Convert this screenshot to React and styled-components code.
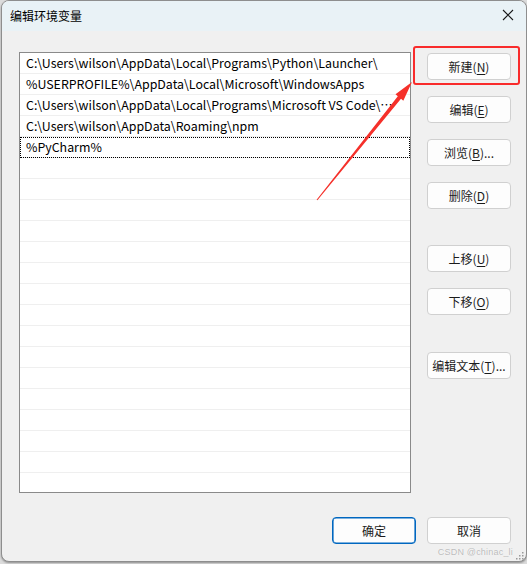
import React from "react";
import styled, { createGlobalStyle } from "styled-components";

const GlobalStyle = createGlobalStyle`
  html, body {
    margin: 0;
    padding: 0;
    background: #dcdcdc;
  }
  body {
    font-family: "Noto Sans CJK SC", "Noto Sans", sans-serif;
  }
`;

const Page = styled.div`
  position: relative;
  width: 527px;
  height: 564px;
  overflow: hidden;
`;

const Window = styled.div`
  box-sizing: border-box;
  margin-left: 1px;
  width: 526px;
  height: 562px;
  display: flex;
  flex-direction: column;
  background: #f0f0f0;
  border: 1px solid #8e8e8e;
  border-radius: 8px;
  overflow: hidden;
  box-shadow: 0 1px 2px rgba(0, 0, 0, 0.35);
`;

const TitleBar = styled.div`
  height: 30px;
  flex: none;
  display: flex;
  align-items: center;
  justify-content: space-between;
  padding: 0 12px 2px 8px;
  box-sizing: border-box;
  background: #e9f2f6;
  font-size: 12px;
  color: #000;
`;

const CloseIcon = () => (
  <svg width="12" height="12" viewBox="0 0 12 12">
    <path d="M1 1 L11 11 M11 1 L1 11" stroke="#1a1a1a" strokeWidth="1.1" />
  </svg>
);

const Body = styled.div`
  flex: 1;
  display: flex;
  flex-direction: column;
  padding: 21px 15px 0 17px;
`;

const Main = styled.div`
  display: flex;
  gap: 16px;
`;

const List = styled.div`
  box-sizing: border-box;
  width: 392px;
  height: 441px;
  background: #fff;
  border: 1px solid #8a8a8a;
  overflow: hidden;
`;

const Row = styled.div`
  box-sizing: border-box;
  height: 21px;
  padding: 1px 12px 0 6px;
  border-bottom: 1px solid #efefef;
  font-size: 12.4px;
  line-height: 19px;
  color: #000;
  white-space: nowrap;
  overflow: hidden;
  text-overflow: ellipsis;
  outline: ${(p) => (p.$focused ? "1px dotted #000" : "none")};
  outline-offset: -1px;
`;

const Side = styled.div`
  display: flex;
  flex-direction: column;
  gap: 16px;
  padding-top: 1px;
`;

const Button = styled.button`
  box-sizing: border-box;
  width: 84px;
  height: 27px;
  margin-top: ${(p) => p.$push || 0}px;
  padding: 0;
  background: #fdfdfd;
  border: 1px solid ${(p) => (p.$primary ? "#0067c0" : "#d0d0d0")};
  box-shadow: ${(p) => (p.$primary ? "inset 0 0 0 0.6px #0067c0" : "none")};
  border-radius: 4px;
  font-family: "Noto Sans CJK SC", "Noto Sans", sans-serif;
  font-size: 12px;
  color: #1b1b1b;
  u {
    text-underline-offset: 2px;
  }
`;

const Footer = styled.div`
  display: flex;
  justify-content: flex-end;
  gap: 11px;
  margin-top: 24px;
`;

const Highlight = styled.div`
  position: absolute;
  left: 413px;
  top: 46px;
  width: 107px;
  height: 39px;
  box-sizing: border-box;
  border: 2px solid #f92b2b;
  border-radius: 3px;
`;

const Arrow = styled.svg`
  position: absolute;
  left: 0;
  top: 0;
  pointer-events: none;
`;

const Watermark = styled.div`
  position: absolute;
  right: 14px;
  bottom: 7px;
  font-family: "Liberation Sans", sans-serif;
  font-size: 9px;
  letter-spacing: 0.2px;
  color: rgba(175, 175, 175, 0.85);
  text-shadow: 0 0 1px #fff;
`;

const Grip = styled.svg`
  position: absolute;
  right: 3px;
  bottom: 4px;
`;

const paths = [
  "C:\\Users\\wilson\\AppData\\Local\\Programs\\Python\\Launcher\\",
  "%USERPROFILE%\\AppData\\Local\\Microsoft\\WindowsApps",
  "C:\\Users\\wilson\\AppData\\Local\\Programs\\Microsoft VS Code\\bin",
  "C:\\Users\\wilson\\AppData\\Roaming\\npm",
  "%PyCharm%",
];

const rows = Array.from({ length: 21 }, (_, i) => paths[i] || "");

export default function App() {
  return (
    <Page>
      <GlobalStyle />
      <Window>
        <TitleBar>
          <span>编辑环境变量</span>
          <CloseIcon />
        </TitleBar>
        <Body>
          <Main>
            <List>
              {rows.map((text, i) => (
                <Row key={i} $focused={i === 4}>
                  {text}
                </Row>
              ))}
            </List>
            <Side>
              <Button>新建(<u>N</u>)</Button>
              <Button>编辑(<u>E</u>)</Button>
              <Button>浏览(<u>B</u>)...</Button>
              <Button>删除(<u>D</u>)</Button>
              <Button $push={20}>上移(<u>U</u>)</Button>
              <Button>下移(<u>O</u>)</Button>
              <Button $push={21}>编辑文本(<u>T</u>)...</Button>
            </Side>
          </Main>
          <Footer>
            <Button $primary>确定</Button>
            <Button>取消</Button>
          </Footer>
        </Body>
      </Window>
      <Highlight />
      <Arrow width="527" height="564" viewBox="0 0 527 564">
        <polygon
          points="316.6,199.7 397.8,96.2 395.5,94.3 412,82 403.3,100.7 401,98.8 317.4,200.3"
          fill="#f5302a"
        />
      </Arrow>
      <Watermark>CSDN @chinac_li</Watermark>
      <Grip width="8" height="8" viewBox="0 0 8 8">
        <rect x="6" y="0" width="1.5" height="1.5" fill="#9a9a9a" />
        <rect x="3" y="3" width="1.5" height="1.5" fill="#9a9a9a" />
        <rect x="6" y="3" width="1.5" height="1.5" fill="#9a9a9a" />
        <rect x="0" y="6" width="1.5" height="1.5" fill="#9a9a9a" />
        <rect x="3" y="6" width="1.5" height="1.5" fill="#9a9a9a" />
        <rect x="6" y="6" width="1.5" height="1.5" fill="#9a9a9a" />
      </Grip>
    </Page>
  );
}
